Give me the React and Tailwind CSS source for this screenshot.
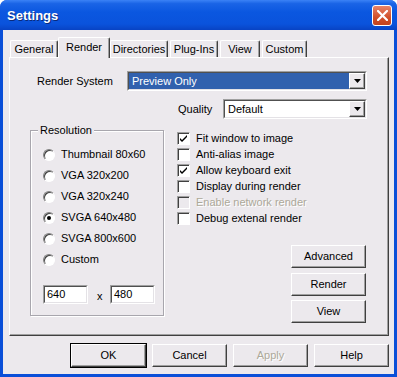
import React from "react";

const raised =
  "border border-t-white border-l-white border-r-[#404040] border-b-[#404040] shadow-[inset_-1px_-1px_0_#a0a0a0]";
const sunkenOuter =
  "border border-t-[#a0a0a0] border-l-[#a0a0a0] border-r-white border-b-white";
const sunkenInner =
  "border border-t-[#505050] border-l-[#505050] border-r-[#e4e2e6] border-b-[#e4e2e6]";

function Arrow() {
  return (
    <svg width="7" height="4" viewBox="0 0 7 4">
      <path d="M0 0H7L3.5 4Z" fill="#000" />
    </svg>
  );
}

function Combo({ value, selected, w }) {
  return (
    <div className={`flex h-[20px] ${w} ${sunkenOuter}`}>
      <div className={`flex flex-1 bg-white ${sunkenInner}`}>
        <div
          className={`flex flex-1 items-center pl-[3px] ${
            selected ? "bg-[#3161ae] text-white" : "text-black"
          }`}
        >
          {value}
        </div>
        <div
          className={`flex w-[16px] items-center justify-center bg-[#ece9ed] ${raised}`}
        >
          <Arrow />
        </div>
      </div>
    </div>
  );
}

function Radio({ label, checked }) {
  return (
    <div className="flex h-[21px] items-center">
      <div className="flex h-[12px] w-[12px] items-center justify-center rounded-full border border-t-[#808080] border-l-[#808080] border-r-white border-b-white bg-white shadow-[inset_1px_1px_0_#404040]">
        {checked && <div className="h-[4px] w-[4px] rounded-full bg-black" />}
      </div>
      <span className="ml-[6px]">{label}</span>
    </div>
  );
}

function Check({ label, checked, disabled }) {
  return (
    <div className="flex h-[16px] items-center">
      <div
        className={`flex h-[13px] w-[13px] items-center justify-center ${sunkenOuter} ${
          disabled ? "bg-[#ece9ed]" : "bg-white"
        } shadow-[inset_1px_1px_0_#404040]`}
      >
        {checked && (
          <svg width="7" height="7" viewBox="0 0 7 7">
            <path d="M0 3L2 5L7 0V2L2 7L0 5Z" fill="#000" />
          </svg>
        )}
      </div>
      <span
        className={`ml-[6px] ${
          disabled ? "text-[#aca899] [text-shadow:1px_1px_0_#fff]" : ""
        }`}
      >
        {label}
      </span>
    </div>
  );
}

function Button({ children, disabled, def, className = "" }) {
  return (
    <div
      className={`flex h-[23px] w-[75px] items-center justify-center ${
        def ? "outline outline-1 outline-black -outline-offset-0" : ""
      } ${className}`}
    >
      <div
        className={`flex h-full w-full items-center justify-center ${raised} ${
          disabled ? "text-[#aca899] [text-shadow:1px_1px_0_#fff]" : "text-black"
        }`}
      >
        {children}
      </div>
    </div>
  );
}

function Tab({ label, selected, w, ml = "" }) {
  return (
    <div
      className={`flex ${w} ${ml} items-start justify-center rounded-t-[2px] border-t border-l border-r border-t-white border-l-white border-r-[#404040] shadow-[inset_-1px_0_0_#a0a0a0] ${
        selected ? "relative z-10 -mb-[1px] h-[21px] pt-[3px] bg-[#ece9ed]" : "h-[17px] pt-[2px]"
      }`}
    >
      {label}
    </div>
  );
}

export default function App() {
  return (
    <div className="h-[377px] w-[397px] bg-white font-['Liberation_Sans',Arial,sans-serif] text-[11px] leading-[13px] text-black">
      <div className="flex h-full w-full flex-col overflow-hidden rounded-t-[7px] bg-[#0a4fd8]">
        {/* title bar */}
        <div className="flex h-[30px] items-center bg-[linear-gradient(to_bottom,#3b82f6_0%,#1a64e6_12%,#0b57e0_40%,#0a53dc_80%,#0843c4_100%)] pl-[7px] pr-[5px]">
          <span className="flex-1 text-[13px] font-bold text-white [text-shadow:1px_1px_0_#0a2a7a]">
            Settings
          </span>
          <div className="flex h-[21px] w-[20px] items-center justify-center rounded-[3px] border border-white bg-[linear-gradient(to_bottom,#e8846a,#d1502a_60%,#c4421d)]">
            <svg width="11" height="11" viewBox="0 0 11 11">
              <path d="M1 1L10 10M10 1L1 10" stroke="#fff" strokeWidth="2.2" strokeLinecap="square" />
            </svg>
          </div>
        </div>
        {/* body */}
        <div className="mx-[3px] mb-[3px] flex flex-1 flex-col bg-[#ece9ed]">
          <div className="flex h-[27px] items-end pl-[7px]">
            <Tab label="General" w="w-[48px]" />
            <Tab label="Render" w="w-[52px]" selected />
            <Tab label="Directories" w="w-[58px]" />
            <Tab label="Plug-Ins" w="w-[48px]" ml="ml-[2px]" />
            <Tab label="View" w="w-[40px]" ml="ml-[2px]" />
            <Tab label="Custom" w="w-[45px]" ml="ml-[2px]" />
          </div>
          <div className="ml-[6px] flex h-[279px] w-[380px] flex-col border border-t-white border-l-white border-r-[#404040] border-b-[#404040] shadow-[inset_-1px_-1px_0_#a0a0a0]">
            <div className="mt-[13px] flex h-[20px] items-center">
              <span className="ml-[27px] w-[90px]">Render System</span>
              <Combo value="Preview Only" selected w="w-[240px]" />
            </div>
            <div className="mt-[8px] flex h-[20px] items-center">
              <span className="ml-[168px] w-[45px]">Quality</span>
              <Combo value="Default" w="w-[144px]" />
            </div>
            <div className="mt-[11px] flex">
              {/* Resolution group */}
              <div className="ml-[20px] flex h-[186px] w-[134px] flex-col border border-[#a8a6ad] shadow-[inset_1px_1px_0_#fff,1px_1px_0_#fff]">
                <span className="-mt-[7px] ml-[7px] w-fit bg-[#ece9ed] px-[2px]">
                  Resolution
                </span>
                <div className="ml-[12px] mt-[7px] flex flex-col">
                  <Radio label="Thumbnail 80x60" />
                  <Radio label="VGA 320x200" />
                  <Radio label="VGA 320x240" />
                  <Radio label="SVGA 640x480" checked />
                  <Radio label="SVGA 800x600" />
                  <Radio label="Custom" />
                </div>
                <div className="ml-[12px] mt-[15px] flex items-center">
                  <div className={`h-[19px] w-[45px] bg-white ${sunkenOuter}`}>
                    <div className={`flex h-full items-center pl-[2px] ${sunkenInner}`}>640</div>
                  </div>
                  <span className="ml-[9px] mt-[4px] w-[13px]">x</span>
                  <div className={`h-[19px] w-[45px] bg-white ${sunkenOuter}`}>
                    <div className={`flex h-full items-center pl-[2px] ${sunkenInner}`}>480</div>
                  </div>
                </div>
              </div>
              {/* right column */}
              <div className="ml-[13px] flex flex-col">
                <Check label="Fit window to image" checked />
                <Check label="Anti-alias image" />
                <Check label="Allow keyboard exit" checked />
                <Check label="Display during render" />
                <Check label="Enable network render" disabled />
                <Check label="Debug extenal render" />
                <div className="ml-[114px] mt-[19px] flex flex-col gap-[4px]">
                  <Button>Advanced</Button>
                  <Button className="mt-[1px]">Render</Button>
                  <Button>View</Button>
                </div>
              </div>
            </div>
          </div>
          <div className="mt-[8px] flex justify-end gap-[6px] pr-[5px]">
            <Button def>OK</Button>
            <Button>Cancel</Button>
            <Button disabled>Apply</Button>
            <Button>Help</Button>
          </div>
        </div>
      </div>
    </div>
  );
}
